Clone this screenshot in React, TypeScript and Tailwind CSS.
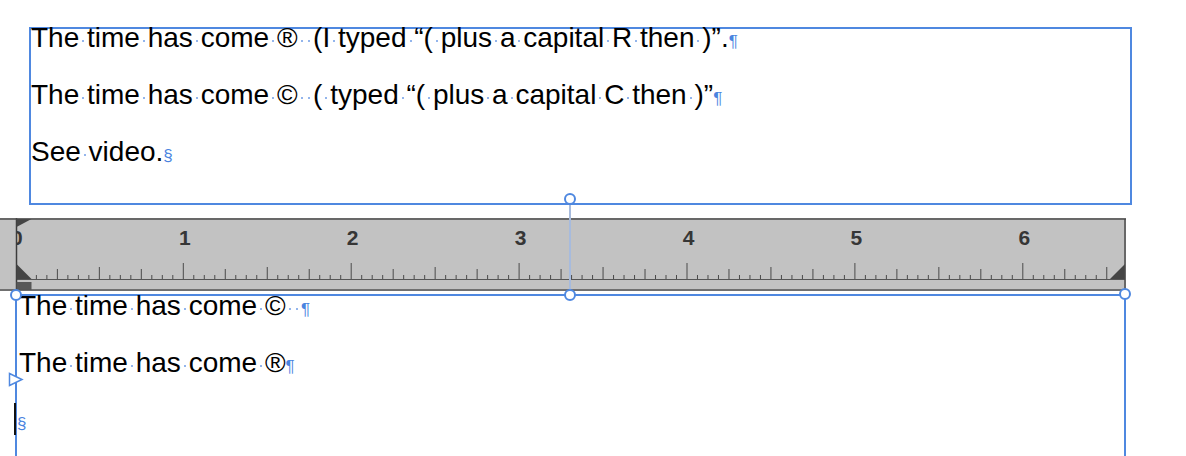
const BLUE = "#4f88e0";

const INCH = 167.9;
const ZERO = 15.4;

// spaces are shown as small blue dots, like an editor with invisibles turned on
function Shown({ text }: { text: string }) {
  const parts = text.split(" ");
  return (
    <>
      {parts.map((p, i) => (
        <span key={i}>
          {p}
          {i < parts.length - 1 && (
            <span className="relative">
              {" "}
              <span className="absolute left-[3px] top-[18px] h-[2px] w-[2px] rounded-full bg-[#6f9de6]" />
            </span>
          )}
        </span>
      ))}
    </>
  );
}

function Mark({ children }: { children: string }) {
  return <span className="text-[17px] leading-none text-[#4a84df]">{children}</span>;
}

function Ruler() {
  const ticks: { x: number; h: number }[] = [];
  for (let i = 1; ZERO + i * (INCH / 16) < 1110; i++) {
    const h = i % 16 === 0 ? 16 : i % 8 === 0 ? 12 : i % 4 === 0 ? 10 : 4;
    ticks.push({ x: ZERO + i * (INCH / 16), h });
  }
  return (
    <div className="mt-[13px] h-[73px] w-[1126px] bg-[#c2c2c2]">
      <svg width="1126" height="73" className="block">
        {ticks.map((t) => (
          <line key={t.x} x1={t.x} x2={t.x} y1={61} y2={61 - t.h} stroke="#4a4a4a" strokeWidth="1" />
        ))}
        <line x1="16" x2="1125" y1="61.5" y2="61.5" stroke="#555" strokeWidth="1" />
        {[0, 1, 2, 3, 4, 5, 6].map((n) => (
          <text
            key={n}
            x={ZERO + n * INCH + 1.5}
            y="26.5"
            textAnchor="middle"
            fontFamily="Liberation Sans, sans-serif"
            fontWeight="700"
            fontSize="21"
            fill="#363636"
          >
            {n}
          </text>
        ))}
        <rect x="0" y="1" width="16" height="71" fill="#c2c2c2" />
        <line x1="16.5" x2="16.5" y1="0" y2="73" stroke="#3c3c3c" strokeWidth="1.5" />
        <polygon points="16.5,1 31.5,1 16.5,9" fill="#454545" />
        <polygon points="16.5,46 16.5,61 31.5,61" fill="#454545" />
        <rect x="16.5" y="64" width="15" height="8" fill="#575757" />
        <polygon points="1125,46 1125,61 1110,61" fill="#454545" />
        <line x1="0" x2="1126" y1="1" y2="1" stroke="#4a4a4a" strokeWidth="1.5" />
        <line x1="0" x2="1126" y1="72" y2="72" stroke="#555" strokeWidth="1.5" />
        <line x1="1125" x2="1125" y1="1" y2="72" stroke="#4a4a4a" strokeWidth="1.5" />
      </svg>
    </div>
  );
}

function Handle({ className }: { className: string }) {
  return <div className={`absolute h-[12px] w-[12px] rounded-full border-2 border-[#4f88e0] bg-white ${className}`} />;
}

export default function App() {
  return (
    <div className="relative h-[456px] w-[1186px] overflow-hidden bg-white font-['Liberation_Sans',sans-serif] text-black">
      <div className="ml-[29px] mt-[27px] h-[178px] w-[1103px] border-2" style={{ borderColor: BLUE }}>
        <div className="-mt-[20px] text-[28px] leading-[57px] whitespace-pre">
          <p>
            <Shown text="The time has come ®  (I typed “( plus a capital R then )”." />
            <Mark>¶</Mark>
          </p>
          <p>
            <Shown text="The time has come ©  ( typed “( plus a capital C then )”" />
            <Mark>¶</Mark>
          </p>
          <p>
            <Shown text="See video." />
            <Mark>§</Mark>
          </p>
        </div>
      </div>

      <Ruler />

      <div className="ml-[15px] mt-[3px] h-[170px] w-[1111px] border-x-2 border-t-2" style={{ borderColor: BLUE }}>
        <div className="-mt-[19px] pl-[2px] text-[28px] leading-[57px] whitespace-pre">
          <p>
            <Shown text="The time has come ©  " />
            <Mark>¶</Mark>
          </p>
          <p>
            <Shown text="The time has come ®" />
            <Mark>¶</Mark>
          </p>
          <p className="-ml-[2px]">
            <Mark>§</Mark>
          </p>
        </div>
      </div>

      {/* overlays: connector, handles, indent marker, caret */}
      <div className="absolute left-[569px] top-[205px] h-[86px] w-[2px] bg-[#a7bbdd]" />
      <Handle className="left-[564px] top-[193px]" />
      <Handle className="left-[10px] top-[289px]" />
      <Handle className="left-[564px] top-[289px]" />
      <Handle className="left-[1119px] top-[288px]" />
      <svg className="absolute left-[8px] top-[372px]" width="16" height="16">
        <polygon points="1.5,1.5 14,7.5 1.5,13.5" fill="white" stroke={BLUE} strokeWidth="1.5" />
      </svg>
      <div className="absolute left-[14px] top-[403px] h-[32px] w-[2px] bg-[#111]" />
    </div>
  );
}
